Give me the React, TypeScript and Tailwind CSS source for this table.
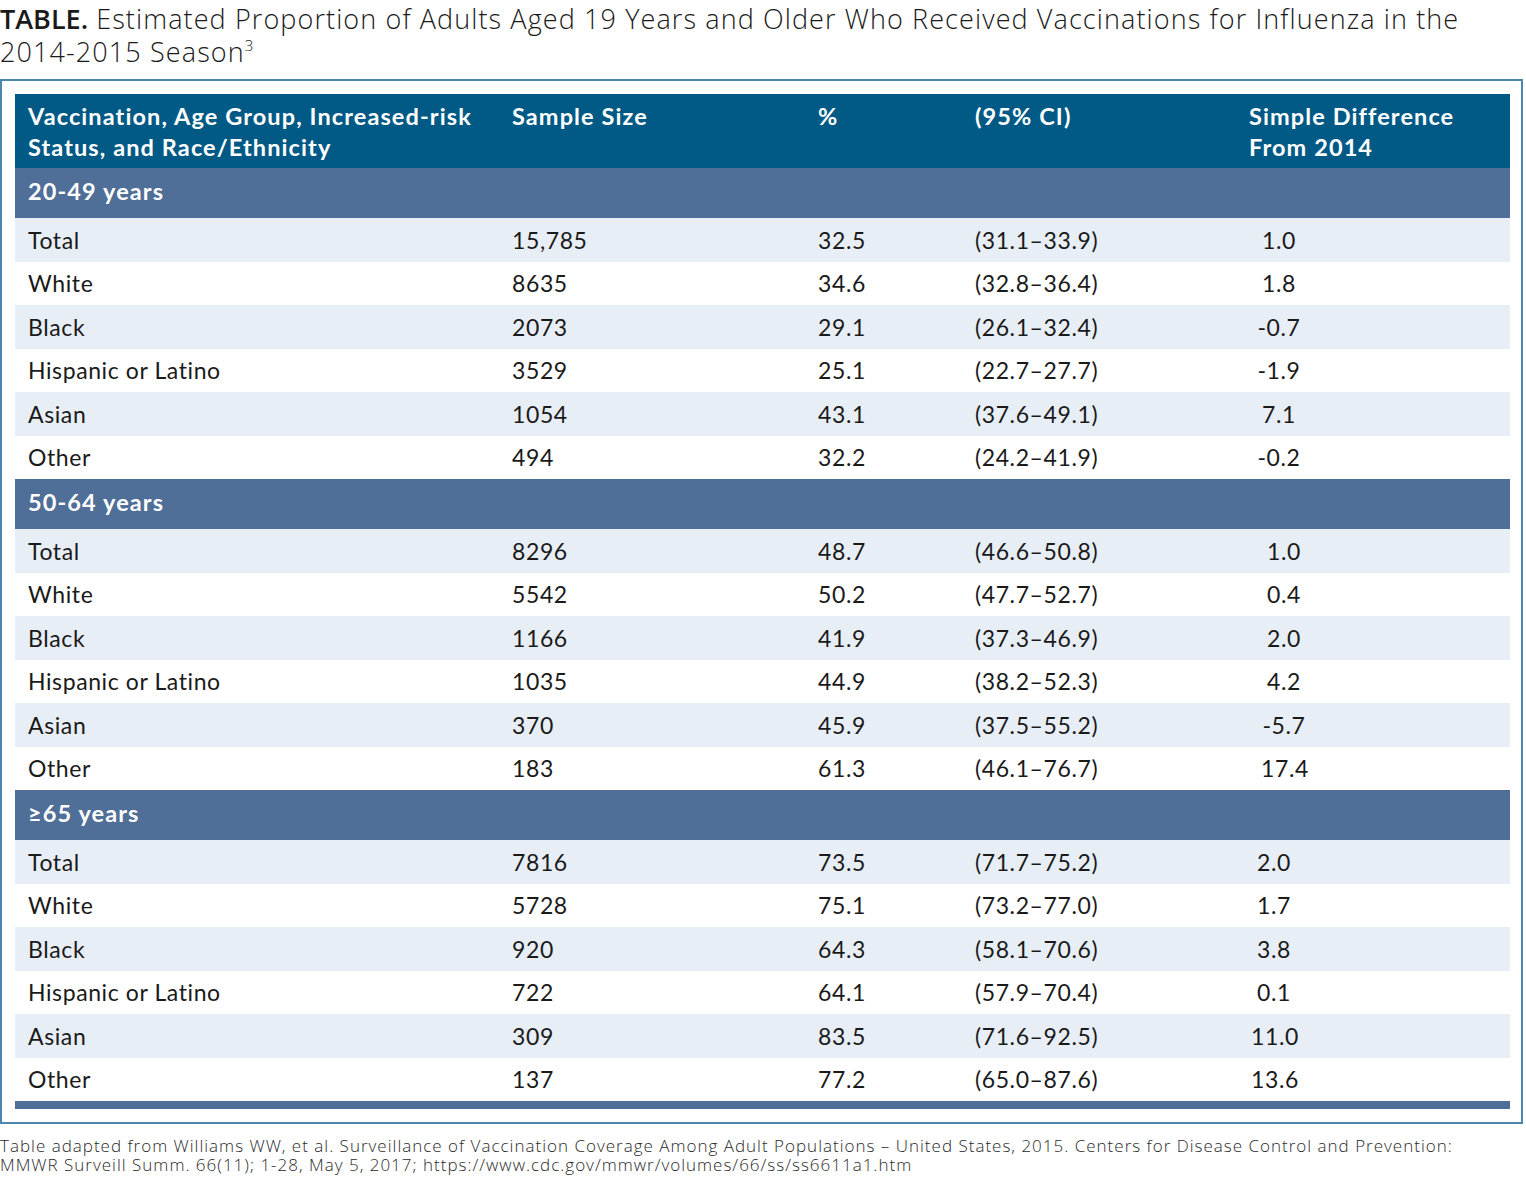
import React from "react";

type Row = { label: string; n: string; pct: string; ci: string; diff: string };
type Group = { title: string; offset: string; rows: Row[] };

const groups: Group[] = [
  {
    title: "20-49 years",
    offset: "pl-[20px]",
    rows: [
      { label: "Total", n: "15,785", pct: "32.5", ci: "(31.1–33.9)", diff: "1.0" },
      { label: "White", n: "8635", pct: "34.6", ci: "(32.8–36.4)", diff: "1.8" },
      { label: "Black", n: "2073", pct: "29.1", ci: "(26.1–32.4)", diff: "-0.7" },
      { label: "Hispanic or Latino", n: "3529", pct: "25.1", ci: "(22.7–27.7)", diff: "-1.9" },
      { label: "Asian", n: "1054", pct: "43.1", ci: "(37.6–49.1)", diff: "7.1" },
      { label: "Other", n: "494", pct: "32.2", ci: "(24.2–41.9)", diff: "-0.2" },
    ],
  },
  {
    title: "50-64 years",
    offset: "pl-[25px]",
    rows: [
      { label: "Total", n: "8296", pct: "48.7", ci: "(46.6–50.8)", diff: "1.0" },
      { label: "White", n: "5542", pct: "50.2", ci: "(47.7–52.7)", diff: "0.4" },
      { label: "Black", n: "1166", pct: "41.9", ci: "(37.3–46.9)", diff: "2.0" },
      { label: "Hispanic or Latino", n: "1035", pct: "44.9", ci: "(38.2–52.3)", diff: "4.2" },
      { label: "Asian", n: "370", pct: "45.9", ci: "(37.5–55.2)", diff: "-5.7" },
      { label: "Other", n: "183", pct: "61.3", ci: "(46.1–76.7)", diff: "17.4" },
    ],
  },
  {
    title: "≥65 years",
    offset: "pl-[15px]",
    rows: [
      { label: "Total", n: "7816", pct: "73.5", ci: "(71.7–75.2)", diff: "2.0" },
      { label: "White", n: "5728", pct: "75.1", ci: "(73.2–77.0)", diff: "1.7" },
      { label: "Black", n: "920", pct: "64.3", ci: "(58.1–70.6)", diff: "3.8" },
      { label: "Hispanic or Latino", n: "722", pct: "64.1", ci: "(57.9–70.4)", diff: "0.1" },
      { label: "Asian", n: "309", pct: "83.5", ci: "(71.6–92.5)", diff: "11.0" },
      { label: "Other", n: "137", pct: "77.2", ci: "(65.0–87.6)", diff: "13.6" },
    ],
  },
];

const grid = "grid grid-cols-[484px_306px_157px_274px_1fr]";
const head = "font-bold text-[23.5px] tracking-[1.1px]";

export default function App() {
  return (
    <div className="w-[1526px] h-[1200px] bg-white text-[#1a1a1a] font-['Lato','Liberation_Sans',sans-serif]">
      <h1 className="font-['Open_Sans','Lato',sans-serif] text-[27px] leading-[33px] font-light tracking-[1.1px] text-[#1a1a1a] pt-[2px]">
        <span className="font-semibold tracking-[0px]">TABLE.</span> Estimated Proportion of Adults Aged 19 Years and Older Who Received Vaccinations for Influenza in the
        <br />
        2014-2015 Season<sup className="text-[15px] relative -top-[11px] align-baseline">3</sup>
      </h1>
      <div className="mt-[11px] w-[1523px] border-2 border-[#4b86ad] pt-[13px] pb-[13px] pl-[13px] pr-[11px]">
        <div className={`${grid} ${head} bg-[#015a85] text-white leading-[31px] h-[74px] pt-[7px]`}>
          <div className="pl-[13px]">
            Vaccination, Age Group, Increased-risk
            <br />
            Status, and Race/Ethnicity
          </div>
          <div className="pl-[13px]">Sample Size</div>
          <div className="pl-[13px]">%</div>
          <div className="pl-[13px]">(95% CI)</div>
          <div className="pl-[13px]">
            Simple Difference
            <br />
            From 2014
          </div>
        </div>
        {groups.map((g) => (
          <div key={g.title}>
            <div className={`h-[50px] bg-[#4f6e98] text-white flex items-center pl-[13px] pb-[3px] ${head}`}>
              {g.title}
            </div>
            {g.rows.map((r, i) => (
              <div
                key={r.label}
                className={`${grid} h-[43.5px] items-center text-[23px] tracking-[0.6px] ${i % 2 === 0 ? "bg-[#e8eef6]" : "bg-white"}`}
              >
                <div className="pl-[13px]">{r.label}</div>
                <div className="pl-[13px]">{r.n}</div>
                <div className="pl-[13px]">{r.pct}</div>
                <div className="pl-[13px]">{r.ci}</div>
                <div className={g.offset}>
                  <div className="w-[46px] text-center">{r.diff}</div>
                </div>
              </div>
            ))}
          </div>
        ))}
        <div className="h-[8px] bg-[#4f6e98]" />
      </div>
      <p className="mt-[12px] font-['Open_Sans','Lato',sans-serif] text-[17px] leading-[19px] font-light tracking-[1px] text-[#2a2a2a]">
        Table adapted from Williams WW, et al. Surveillance of Vaccination Coverage Among Adult Populations – United States, 2015. Centers for Disease Control and Prevention:
        <br />
        MMWR Surveill Summ. 66(11); 1-28, May 5, 2017; https://www.cdc.gov/mmwr/volumes/66/ss/ss6611a1.htm
      </p>
    </div>
  );
}
